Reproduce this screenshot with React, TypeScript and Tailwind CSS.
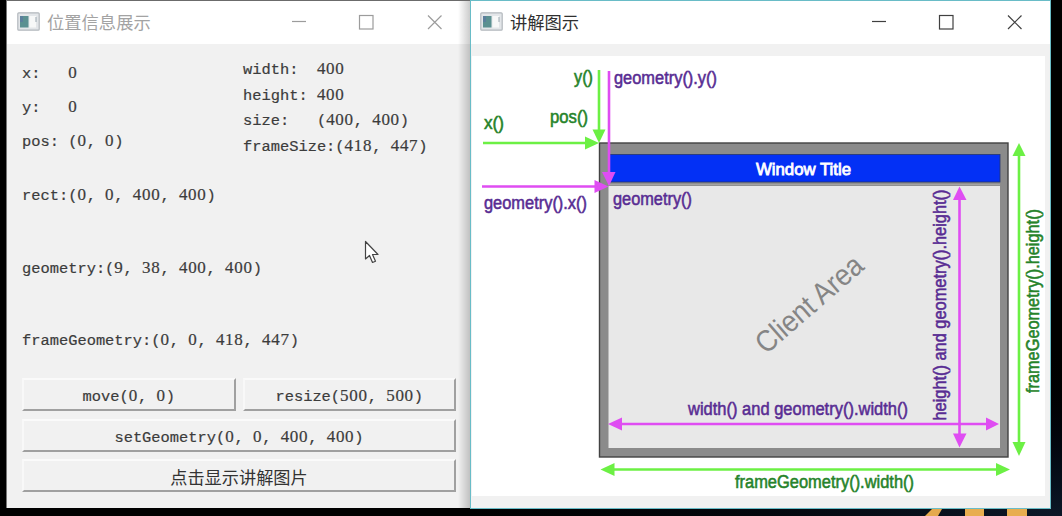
import type { ReactNode } from 'react';

function Mono({ text }: { text: string }) {
  return (
    <span className="block h-[20px] whitespace-pre font-['Liberation_Mono','Noto_Sans_CJK_SC',monospace] text-[15.4px] leading-[20px] text-[#3c3c3c] [-webkit-text-stroke:0.2px_#3c3c3c]">
      {text.split(/(\d+)/).map((part, i) =>
        /^\d+$/.test(part) ? (
          <span key={i} className="font-['Liberation_Serif',serif] text-[17px] tracking-[0.7px]">
            {part}
          </span>
        ) : (
          part
        ),
      )}
    </span>
  );
}

function AppIcon() {
  return (
    <svg width="23" height="19" viewBox="0 0 23 19" className="shrink-0">
      <rect x="0.8" y="0.8" width="21.4" height="17.4" rx="1" fill="#e3e6e9" stroke="#b3b8bd" strokeWidth="1.2" />
      <rect x="3" y="4" width="8.5" height="11.5" fill="#5b9091" />
      <rect x="3" y="4" width="3" height="6" fill="#5b7f9c" />
      <rect x="12.5" y="4" width="6.5" height="11.5" fill="#f7f8f8" />
      <path d="M19 5v5" stroke="#9aa7b0" strokeWidth="1" />
    </svg>
  );
}

function TitleBar({ title, active }: { title: string; active: boolean }) {
  const tone = active ? 'text-[#303030]' : 'text-[#a3a3a3]';
  const strokeTone = active ? 'text-[#404040]' : 'text-[#9c9c9c]';
  return (
    <div className="flex h-[43px] shrink-0 items-center bg-white pb-[2px]">
      <AppIcon />
      <span className={`ml-[7px] font-['Noto_Sans_CJK_SC',sans-serif] text-[17.3px] leading-[24px] ${tone}`}>{title}</span>
      <svg width="152" height="18" viewBox="0 0 152 18" className={`ml-auto shrink-0 ${strokeTone}`} fill="none" stroke="currentColor" strokeWidth="1.2">
        <path d="M1 8.5h14" />
        <rect x="68.5" y="2.5" width="13.5" height="13.5" />
        <path d="M137 2.5l13.5 13.5M150.5 2.5L137 16" />
      </svg>
    </div>
  );
}

function PushButton({ children }: { children: ReactNode }) {
  return (
    <button className="flex h-[33px] flex-1 items-center justify-center border-2 border-t-[#fafafa] border-r-[#a0a0a0] border-b-[#a0a0a0] border-l-[#f8f8f8] bg-[#f1f1f1] pt-[3px]">
      {children}
    </button>
  );
}

const GREEN = '#6cf044';
const PINK = '#df4df2';

function Arrow({ d, heads, color }: { d: string; heads: string[]; color: string }) {
  return (
    <g>
      <path d={d} stroke={color} strokeWidth="2.6" />
      {heads.map((h) => (
        <path key={h} d={h} fill={color} />
      ))}
    </g>
  );
}

type LabelProps = { x: number; y: number; w: number; text: string; color: string; up?: boolean };

function Label({ x, y, w, text, color, up }: LabelProps) {
  return (
    <text
      x={x}
      y={y}
      textLength={w}
      lengthAdjust="spacingAndGlyphs"
      fill={color}
      stroke={color}
      strokeWidth="0.55"
      fontSize="18"
      transform={up ? `rotate(-90 ${x} ${y})` : undefined}
    >
      {text}
    </text>
  );
}

function Diagram() {
  const green = '#26832a';
  const violet = '#582c93';
  return (
    <svg width="573" height="440" viewBox="472 56 573 440" className="block bg-white font-['Liberation_Sans',sans-serif]">
      <rect x="599.5" y="143" width="408.5" height="314" fill="#8b8b8b" stroke="#424242" strokeWidth="1.4" />
      <rect x="608.5" y="186" width="391.5" height="262" fill="#e8e8e8" />
      <rect x="609" y="154.5" width="391" height="27.5" fill="#0330f5" stroke="#26366f" strokeWidth="0.8" />
      <path d="M608 184.5H1000" stroke="#a4a4a4" strokeWidth="1.5" />

      <Arrow color={GREEN} d="M599 70V132" heads={['M592.5 129.5H605.5L599 143Z']} />
      <Arrow color={GREEN} d="M483 143H588" heads={['M585 136.5V149.5L599 143Z']} />
      <Arrow color={PINK} d="M609 71V175" heads={['M602 172H615.5L609 186Z']} />
      <Arrow color={PINK} d="M482 186.5H597" heads={['M594.5 180V193L608.5 186.5Z']} />
      <Arrow color={PINK} d="M620 424H988" heads={['M622 417.5V430.5L608 424Z', 'M986 417.5V430.5L999 424Z']} />
      <Arrow color={PINK} d="M959.5 198V436" heads={['M953 200H966.5L959.5 186.5Z', 'M953 433.5H966.5L959.5 447.5Z']} />
      <Arrow color={GREEN} d="M1019 154V445" heads={['M1012.5 156H1025.5L1019 143Z', 'M1012.5 442H1025.5L1019 456Z']} />
      <Arrow color={GREEN} d="M612 469.5H998" heads={['M614.5 463V476L600.5 469.5Z', 'M996 463V476L1010 469.5Z']} />

      <Label x={574} y={82.5} w={19} text="y()" color={green} />
      <Label x={614} y={83.5} w={103} text="geometry().y()" color={violet} />
      <Label x={550} y={123} w={38} text="pos()" color={green} />
      <Label x={484} y={128.5} w={20} text="x()" color={green} />
      <Label x={484} y={208.5} w={103} text="geometry().x()" color={violet} />
      <Label x={613} y={205} w={79} text="geometry()" color={violet} />
      <Label x={688} y={414.5} w={220} text="width() and geometry().width()" color={violet} />
      <Label x={735} y={487.5} w={179} text="frameGeometry().width()" color={green} />
      <Label x={945.5} y={420.5} w={231} text="height() and geometry().height()" color={violet} up />
      <Label x={1039} y={393} w={184} text="frameGeometry().height()" color={green} up />
      <text x="756" y="175" textLength="95" lengthAdjust="spacingAndGlyphs" fontSize="16.5" fill="#ffffff" stroke="#ffffff" strokeWidth="0.8">
        Window Title
      </text>
      <text x="766" y="355" transform="rotate(-41 766 355)" textLength="132" lengthAdjust="spacingAndGlyphs" fontSize="30" fill="#858585">
        Client Area
      </text>
    </svg>
  );
}

export default function App() {
  return (
    <div className="relative flex h-[516px] w-[1062px] overflow-hidden bg-black pl-[6px]">
      <section className="relative flex h-[508px] w-[464px] shrink-0 flex-col border-t border-l border-t-[#6b6b6b] border-l-[#777777] bg-[#f1f1f1]">
        <div className="bg-white pr-[27px] pl-[10px]">
          <TitleBar title="位置信息展示" active={false} />
        </div>
        <div className="flex h-[120px] pl-[15px]">
          <div className="flex w-[221px] flex-col gap-[14px] pt-[19px]">
            <Mono text="x:   0" />
            <Mono text="y:   0" />
            <Mono text="pos: (0, 0)" />
          </div>
          <div className="flex flex-col gap-[5.5px] pt-[15px]">
            <Mono text="width:  400" />
            <Mono text="height: 400" />
            <Mono text="size:   (400, 400)" />
            <Mono text="frameSize:(418, 447)" />
          </div>
        </div>
        <div className="flex h-[214px] flex-col gap-[52.5px] pt-[21px] pl-[15px]">
          <Mono text="rect:(0, 0, 400, 400)" />
          <Mono text="geometry:(9, 38, 400, 400)" />
          <Mono text="frameGeometry:(0, 0, 418, 447)" />
        </div>
        <div className="flex flex-col gap-[7.5px] pr-[14px] pl-[15px]">
          <div className="flex gap-[7px]">
            <PushButton>
              <Mono text="move(0, 0)" />
            </PushButton>
            <PushButton>
              <Mono text="resize(500, 500)" />
            </PushButton>
          </div>
          <div className="flex">
            <PushButton>
              <Mono text="setGeometry(0, 0, 400, 400)" />
            </PushButton>
          </div>
          <div className="flex">
            <PushButton>
              <span className="font-['Noto_Sans_CJK_SC',sans-serif] text-[17.2px] leading-[24px] text-[#333333]">点击显示讲解图片</span>
            </PushButton>
          </div>
        </div>
        <div className="absolute top-0 right-0 h-full w-[12px] bg-linear-to-r from-transparent to-black/20" />
      </section>

      <section className="flex h-[509px] w-[581px] shrink-0 flex-col border border-[#69bcc7] bg-[#f1f1f1]">
        <div className="bg-white pr-[27px] pl-[9px]">
          <TitleBar title="讲解图示" active />
        </div>
        <div className="pt-[12px] pl-[1px]">
          <Diagram />
        </div>
      </section>

      <svg className="absolute right-0 bottom-0" width="592" height="7" viewBox="470 509 592 7">
        <defs>
          <linearGradient id="desk" x1="0" x2="1" y1="0" y2="0">
            <stop offset="0" stopColor="#000" />
            <stop offset="0.5" stopColor="#03070d" />
            <stop offset="1" stopColor="#0c1727" />
          </linearGradient>
        </defs>
        <rect x="470" y="509" width="592" height="7" fill="url(#desk)" />
        <path d="M932 509H942L938 516H925Z" fill="#e5a94d" />
        <path d="M965 509H984V516H965Z" fill="#e8ad4f" />
        <path d="M1007 509H1027V516H1007Z" fill="#e8ad4f" />
      </svg>
      <div className="absolute top-[330px] right-0 h-[186px] w-[11px] bg-linear-to-b from-black to-[#0c1727]" />

      <svg className="absolute top-[240px] left-[364px]" width="17" height="25" viewBox="0 0 17 25">
        <path d="M1.5 1.5V19L5.5 15.5L8.5 22.5L11.5 21.2L8.5 14.5H14Z" fill="#fff" stroke="#444" strokeWidth="1.2" strokeLinejoin="round" />
      </svg>
    </div>
  );
}
